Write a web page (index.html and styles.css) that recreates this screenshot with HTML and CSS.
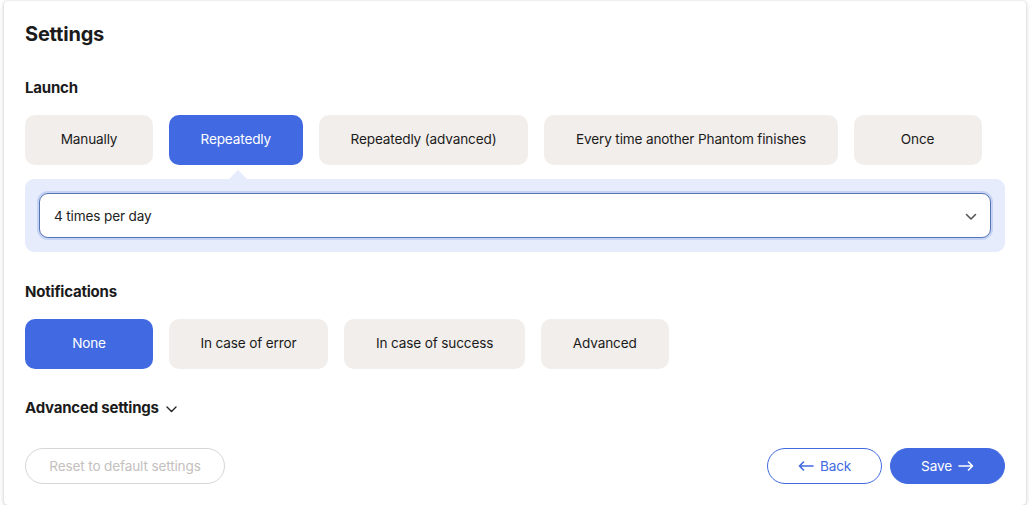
FILE: index.html
```html
<!DOCTYPE html>
<html>
<head>
<meta charset="utf-8">
<link rel="stylesheet" href="styles.css">
</head>
<body>
<div class="card">
  <h1 class="title">Settings</h1>

  <h2 class="label label-launch">Launch</h2>
  <div class="options">
    <button class="opt">Manually</button>
    <button class="opt active">Repeatedly</button>
    <button class="opt">Repeatedly (advanced)</button>
    <button class="opt">Every time another Phantom finishes</button>
    <button class="opt">Once</button>
  </div>

  <div class="panel">
    <span class="pointer"></span>
    <div class="select">
      <span>4 times per day</span>
      <svg class="chev" width="12" height="8" viewBox="0 0 12 8"><path d="M1.5 1.5 L6 6 L10.5 1.5" fill="none" stroke="#555" stroke-width="1.6" stroke-linecap="round" stroke-linejoin="round"/></svg>
    </div>
  </div>

  <h2 class="label label-notif">Notifications</h2>
  <div class="options">
    <button class="opt active">None</button>
    <button class="opt">In case of error</button>
    <button class="opt">In case of success</button>
    <button class="opt">Advanced</button>
  </div>

  <div class="adv">
    <span>Advanced settings</span>
    <svg width="11" height="7" viewBox="0 0 11 7"><path d="M1 1 L5.5 5.5 L10 1" fill="none" stroke="#222" stroke-width="1.4" stroke-linecap="round" stroke-linejoin="round"/></svg>
  </div>

  <div class="footer">
    <button class="pill reset">Reset to default settings</button>
    <div class="actions">
      <button class="pill back">
        <svg width="16" height="10" viewBox="0 0 16 10"><path d="M15 5 H1.5 M5.5 1 L1.5 5 L5.5 9" fill="none" stroke="currentColor" stroke-width="1.6" stroke-linecap="round" stroke-linejoin="round"/></svg>
        Back
      </button>
      <button class="pill save">
        Save
        <svg width="16" height="10" viewBox="0 0 16 10"><path d="M1 5 H14.5 M10.5 1 L14.5 5 L10.5 9" fill="none" stroke="currentColor" stroke-width="1.6" stroke-linecap="round" stroke-linejoin="round"/></svg>
      </button>
    </div>
  </div>
</div>
</body>
</html>
```

FILE: styles.css
```css
* { box-sizing: border-box; }
html, body { margin: 0; padding: 0; background: #ffffff; }
body {
  font-family: Inter, "Noto Sans", "Liberation Sans", sans-serif;
  color: #1b1b1b;
  padding: 1px 4px 0 4px;
}
.card {
  width: 1022px;
  height: 504px;
  background: #fff;
  border-radius: 4px;
  box-shadow: 0 1px 4px rgba(0,0,0,0.22), 0 0 1px rgba(0,0,0,0.15);
  padding: 21px 21px 21px 21px;
}
.title {
  margin: 0;
  font-size: 20px;
  line-height: 24px;
  font-weight: 700;
  letter-spacing: -0.2px;
}
.label {
  margin: 0;
  font-size: 15px;
  line-height: 20px;
  font-weight: 700;
  letter-spacing: -0.2px;
}
.label-launch { margin-top: 32px; margin-bottom: 17px; }
.label-notif { margin-top: 30px; margin-bottom: 17px; }
.options {
  display: flex;
  gap: 15.5px;
}
.opt {
  font-family: inherit;
  height: 50px;
  min-width: 128px;
  padding: 0 32px 2px;
  border: none;
  border-radius: 10px;
  background: #f2eeeb;
  color: #1b1b1b;
  font-size: 13.6px;
  font-weight: 400;
  letter-spacing: -0.15px;
}
.opt.active {
  background: #4169e1;
  color: #fff;
}
.panel {
  position: relative;
  margin-top: 14px;
  width: 980px;
  background: #e6ecfb;
  border-radius: 9px;
  padding: 14px;
}
.pointer {
  position: absolute;
  top: -9px;
  left: 204px;
  width: 0;
  height: 0;
  border-left: 9px solid transparent;
  border-right: 9px solid transparent;
  border-bottom: 9px solid #e6ecfb;
}
.select {
  height: 45px;
  background: #fff;
  border: 1.5px solid #5474b4;
  border-radius: 9px;
  box-shadow: 0 0 0 2px #c6d3f4;
  display: flex;
  align-items: center;
  justify-content: space-between;
  padding: 0 13px 0 14px;
  font-size: 13.6px;
  letter-spacing: -0.15px;
  color: #222;
}
.chev { margin-top: 2px; }
.adv {
  margin-top: 29px;
  display: flex;
  align-items: center;
  gap: 7px;
  font-size: 15px;
  line-height: 20px;
  font-weight: 700;
  letter-spacing: -0.2px;
}
.adv svg { margin-top: 2px; }
.footer {
  margin-top: 30px;
  display: flex;
  justify-content: space-between;
  align-items: center;
  width: 980px;
}
.actions { display: flex; gap: 8px; }
.pill {
  font-family: inherit;
  height: 36px;
  border-radius: 18px;
  font-size: 13.6px;
  font-weight: 400;
  letter-spacing: -0.15px;
  display: inline-flex;
  align-items: center;
  justify-content: center;
  gap: 6px;
  background: #fff;
  padding-bottom: 2px;
}
.reset {
  width: 200px;
  border: 1px solid #d9d5d2;
  color: #c4c0bd;
}
.back {
  width: 115px;
  border: 1px solid #4169e1;
  color: #4169e1;
}
.save {
  width: 115px;
  border: 1px solid #4169e1;
  background: #4169e1;
  color: #fff;
}
```
